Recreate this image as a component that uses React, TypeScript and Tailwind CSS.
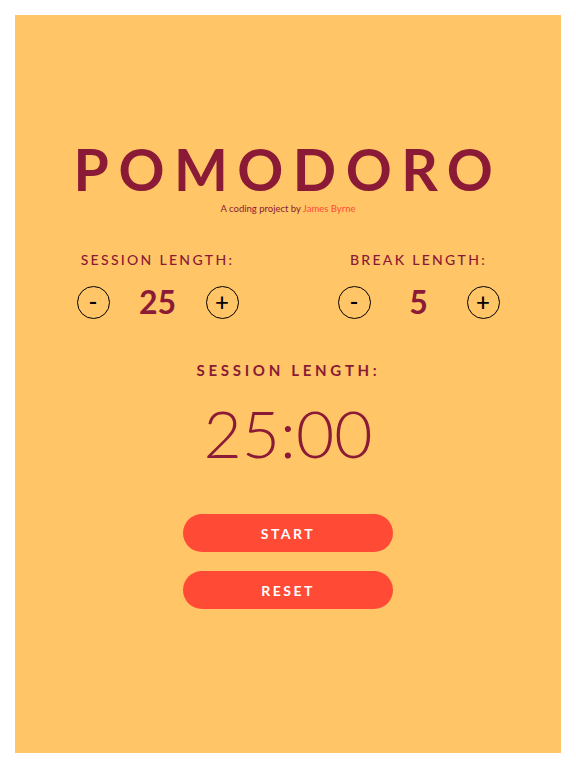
import React from "react";

function Circle({ children }: { children: React.ReactNode }) {
  return (
    <div className="w-[33px] h-[33px] rounded-full border-[1.5px] border-black flex items-center justify-center text-[24px] leading-none text-black font-medium">
      {children}
    </div>
  );
}

function Control({ label, value }: { label: string; value: string }) {
  return (
    <div className="flex flex-col items-center">
      <div className="text-[14px] leading-[20px] tracking-[2.3px] text-[#8a1a35] font-medium">{label}</div>
      <div className="mt-[14px] flex items-center justify-center">
        <Circle>-</Circle>
        <div className="w-[96px] text-center text-[32px] leading-[36px] font-bold text-[#8a1a35]">{value}</div>
        <Circle>+</Circle>
      </div>
    </div>
  );
}

export default function App() {
  return (
    <div className="bg-white w-[576px] h-[768px] p-[15px]" style={{ fontFamily: "Lato, 'Open Sans', sans-serif" }}>
      <div className="bg-[#ffc566] w-[546px] h-[738px] px-3 pt-[114px] flex flex-col items-center">
        <h1 className="text-[57px] leading-[80px] font-bold tracking-[9.5px] text-[#8a1a35]">POMODORO</h1>
        <p className="mt-[-6px] text-[9.5px] leading-[12px] text-[#8a1a35]">
          A coding project by <span className="text-[#ff4a36]">James Byrne</span>
        </p>
        <div className="mt-[35px] w-full grid grid-cols-2">
          <Control label="SESSION LENGTH:" value="25" />
          <Control label="BREAK LENGTH:" value="5" />
        </div>
        <div className="mt-[40px] text-[15px] leading-[20px] tracking-[3.7px] pl-[1px] font-bold text-[#8a1a35]">SESSION LENGTH:</div>
        <div className="mt-[13px] text-[66px] leading-[80px] font-light text-[#8a1a35]">25:00</div>
        <button className="mt-[41px] w-[210px] h-[38px] rounded-full bg-[#ff4a36] text-white font-bold text-[14px] tracking-[2.5px]">START</button>
        <button className="mt-[19px] w-[210px] h-[38px] rounded-full bg-[#ff4a36] text-white font-bold text-[14px] tracking-[2.5px]">RESET</button>
      </div>
    </div>
  );
}
